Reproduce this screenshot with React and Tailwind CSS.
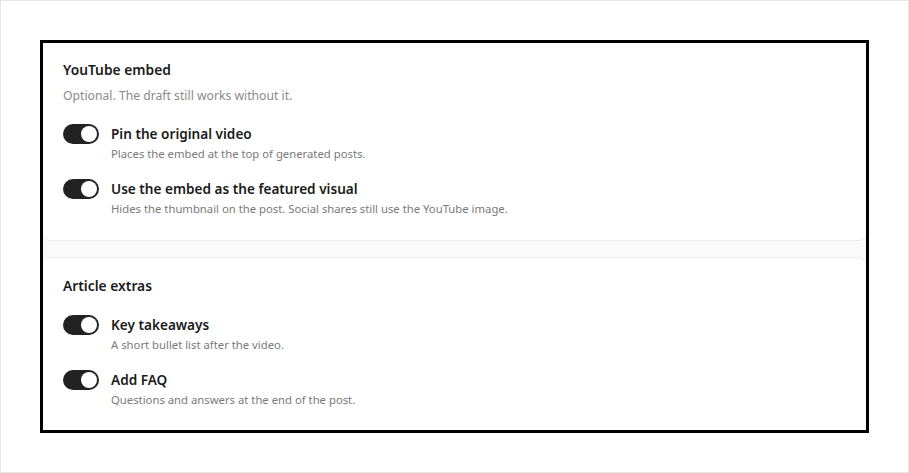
const sections = [
  {
    title: "YouTube embed",
    subtitle: "Optional. The draft still works without it.",
    items: [
      {
        label: "Pin the original video",
        desc: "Places the embed at the top of generated posts.",
      },
      {
        label: "Use the embed as the featured visual",
        desc: "Hides the thumbnail on the post. Social shares still use the YouTube image.",
      },
    ],
  },
  {
    title: "Article extras",
    items: [
      { label: "Key takeaways", desc: "A short bullet list after the video." },
      { label: "Add FAQ", desc: "Questions and answers at the end of the post." },
    ],
  },
];

const Toggle = () => (
  <button className="relative flex h-5 w-9 shrink-0 items-center rounded-full bg-[#222222] px-0.5">
    <span className="ml-auto h-4 w-4 rounded-full bg-white" />
  </button>
);

const Item = ({ item }) => (
  <div className="flex items-start gap-3">
    <Toggle />
    <div className="flex flex-col">
      <div className="text-[13.6px] font-semibold leading-5 text-[#1a1a1a]">
        {item.label}
      </div>
      <div className="mt-0.5 text-[11.3px] leading-4 text-[#7a7a7a]">
        {item.desc}
      </div>
    </div>
  </div>
);

export default function App() {
  const [first, second] = sections;
  return (
    <div
      className="h-[473px] w-[909px] border border-[#e6e6e6] bg-white p-[39px]"
      style={{ fontFamily: '"Noto Sans", "Open Sans", sans-serif' }}
    >
      <div className="flex h-full flex-col gap-4 overflow-hidden border-[3px] border-black bg-[#fafafa]">
        <div className="rounded-b-lg border-b border-[#ececec] bg-white px-5 pb-[23px] pt-[17px]">
          <div className="text-[13.8px] font-semibold leading-5 text-[#1a1a1a]">
            {first.title}
          </div>
          <div className="mt-1.5 text-[12.2px] leading-5 text-[#8a8a8a]">
            {first.subtitle}
          </div>
          <div className="mt-[18px] flex flex-col gap-[17px]">
            {first.items.map((it) => (
              <Item key={it.label} item={it} />
            ))}
          </div>
        </div>
        <div className="flex-1 rounded-t-lg border-t border-[#ececec] bg-white px-5 pt-[18px]">
          <div className="text-[13.8px] font-semibold leading-5 text-[#1a1a1a]">
            {second.title}
          </div>
          <div className="mt-[19px] flex flex-col gap-[17px]">
            {second.items.map((it) => (
              <Item key={it.label} item={it} />
            ))}
          </div>
        </div>
      </div>
    </div>
  );
}
